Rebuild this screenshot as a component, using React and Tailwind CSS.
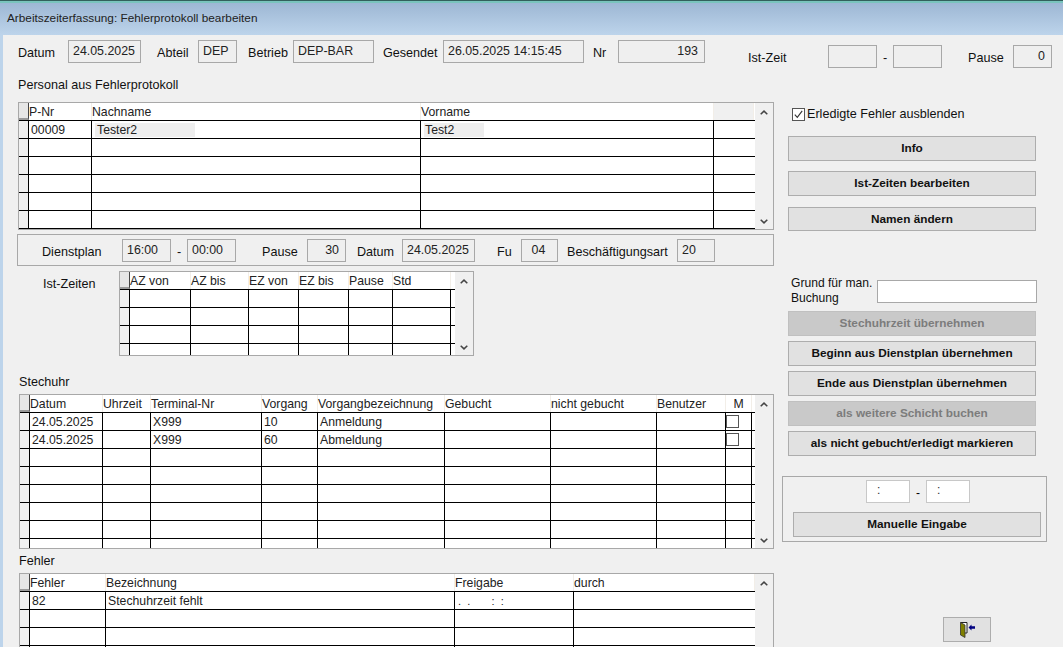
import React from "react";

const Label = ({ className = "", children }) => (
  <div className={"text-[12.6px] leading-[14px] text-[#111] whitespace-nowrap " + className}>{children}</div>
);

const Field = ({ className = "", children }) => (
  <div className={"h-[23px] shrink-0 border border-[#a8a8a8] bg-[#efefef] text-[12.4px] leading-[20px] text-[#222] pl-[4px] pr-[6px] whitespace-nowrap " + className}>{children}</div>
);

const Up = () => (
  <svg width="8" height="5" viewBox="0 0 8 5" fill="none" stroke="#444" strokeWidth="1.5"><path d="M0.7 4.3 4 1.1 7.3 4.3" /></svg>
);
const Down = () => (
  <svg width="8" height="5" viewBox="0 0 8 5" fill="none" stroke="#444" strokeWidth="1.5"><path d="M0.7 0.7 4 3.9 7.3 0.7" /></svg>
);

function Grid({ className, cols, rows, partial, headFill, partialClass }) {
  return (
    <div className={"flex border border-[#a8a8a8] bg-white overflow-hidden shrink-0 " + className}>
      <div className="flex-1 min-w-0 flex flex-col">
        <div className="flex h-[18px] shrink-0 border-b border-black text-[12.25px] leading-[19px] text-[#222]">
          <div className="w-[10px] shrink-0 bg-[#e6e6e6] border-r border-r-[#444] border-b-2 border-b-[#999]" />
          {cols.map((c, i) => (
            <div key={i} className={"shrink-0 whitespace-nowrap border-r border-r-[#f2eee8] " + c.w + " " + (c.head || "")}>{c.label}</div>
          ))}
          <div className={"flex-1 " + (headFill || "")} />
        </div>
        {rows.map((row, r) => (
          <div key={r} className="flex h-[18px] shrink-0 border-b border-black text-[12.25px] leading-[19px] text-[#222]">
            <div className="w-[10px] shrink-0 bg-[#f0f0f0] border-r border-black" />
            {cols.map((c, i) => (
              <div key={i} className={"shrink-0 whitespace-nowrap overflow-hidden " + c.w + " " + (c.open ? "" : "border-r border-black")}>
                {row[i]}
              </div>
            ))}
            <div className="flex-1" />
          </div>
        ))}
        {partial && (
          <div className={"flex shrink-0 " + partialClass}>
            <div className="w-[10px] shrink-0 bg-[#f0f0f0] border-r border-black" />
            {cols.map((c, i) => (
              <div key={i} className={"shrink-0 " + c.w + " " + (c.open ? "" : "border-r border-black")} />
            ))}
          </div>
        )}
      </div>
      <div className="w-[18px] shrink-0 bg-[#f0f0f0] flex flex-col items-center justify-between pt-[7px] pb-[5px]">
        <Up />
        <Down />
      </div>
    </div>
  );
}

const T = ({ className = "pl-[2px]", children }) => <div className={className}>{children}</div>;

const Btn = ({ className = "", disabled, children }) => (
  <div className={
    "flex items-center justify-center border pt-px text-[11.8px] font-bold whitespace-nowrap shrink-0 " +
    (disabled ? "bg-[#c9c9c9] border-[#c0c0c0] text-[#7c7c7c] " : "bg-[#e1e1e1] border-[#adadad] text-[#111] ") + className
  }>{children}</div>
);

const Check = () => (
  <div className="mt-[2px] w-[13px] h-[13px] border border-[#555] bg-white" />
);

export default function App() {
  return (
    <div className="w-[1063px] h-[647px] overflow-hidden bg-[#f0f0f0] flex flex-col font-['Liberation_Sans',Arial,sans-serif]">
      <div className="h-[35px] shrink-0 flex flex-col">
        <div className="h-[1px] bg-[#33605c]" />
        <div className="h-[2px] bg-[#79c4bd]" />
        <div className="flex-1 bg-gradient-to-b from-[#9db7d4] to-[#bdd4eb] pl-[7px] pt-[8px] text-[11.8px] leading-[14px] text-[#222]">
          Arbeitszeiterfassung: Fehlerprotokoll bearbeiten
        </div>
      </div>

      <div className="flex-1 min-h-0 flex">
        <div className="w-[3px] shrink-0 bg-[#bdd4eb]" />
        <div className="flex-1 min-w-0 flex flex-col">
          {/* Kopfzeile */}
          <div className="flex items-start h-[43px] shrink-0 pt-[5px] pl-[15px]">
            <Label className="w-[50px] pt-[6px]">Datum</Label>
            <Field className="w-[73px]">24.05.2025</Field>
            <Label className="w-[41px] ml-[16px] pt-[6px]">Abteil</Label>
            <Field className="w-[39px]">DEP</Field>
            <Label className="w-[45px] ml-[11px] pt-[6px]">Betrieb</Label>
            <Field className="w-[81px]">DEP-BAR</Field>
            <Label className="w-[60px] ml-[9px] pt-[6px]">Gesendet</Label>
            <Field className="w-[141px]">26.05.2025 14:15:45</Field>
            <Label className="w-[25px] ml-[9px] pt-[6px]">Nr</Label>
            <Field className="w-[87px] text-right">193</Field>
            <div className="flex items-start mt-[5px]">
              <Label className="w-[80px] ml-[43px] pt-[6px]">Ist-Zeit</Label>
              <Field className="w-[49px]" />
              <Label className="w-[16px] pt-[6px] text-center">-</Label>
              <Field className="w-[49px]" />
              <Label className="w-[45px] ml-[26px] pt-[6px]">Pause</Label>
              <Field className="w-[39px] text-right">0</Field>
            </div>
          </div>

          <div className="flex-1 min-h-0 flex">
            {/* Linke Spalte */}
            <div className="w-[772px] shrink-0 pl-[15px] flex flex-col">
              <Label className="h-[14px] text-[12.5px]">Personal aus Fehlerprotokoll</Label>
              <Grid
                className="mt-[10px] w-[756px] h-[128px]"
                cols={[
                  { w: "w-[63px]", label: "P-Nr" },
                  { w: "w-[329px]", label: "Nachname" },
                  { w: "w-[293px]", label: "Vorname" },
                  { w: "w-[40px]", head: "bg-[#f0f0f0]", label: "", open: true },
                ]}
                rows={[
                  [
                    <T>00009</T>,
                    <div className="ml-[3px] mt-[2px] w-[100px] h-[14px] leading-[14px] bg-[#eeeeee] pl-[2px]">Tester2</div>,
                    <div className="ml-[3px] mt-[2px] w-[60px] h-[14px] leading-[14px] bg-[#eeeeee] pl-[1px]">Test2</div>,
                    "",
                  ],
                  [], [], [], [], [],
                ]}
              />

              <div className="mt-[4px] -ml-px w-[757px] h-[32px] shrink-0 border border-[#a8a8a8] flex items-start pt-[4px] pl-[24px]">
                <Label className="w-[80px] pt-[6px]">Dienstplan</Label>
                <Field className="w-[49px]">16:00</Field>
                <Label className="w-[16px] pt-[6px] text-center">-</Label>
                <Field className="w-[49px]">00:00</Field>
                <Label className="w-[45px] ml-[26px] pt-[6px]">Pause</Label>
                <Field className="w-[39px] text-right">30</Field>
                <Label className="w-[45px] ml-[11px] pt-[6px]">Datum</Label>
                <Field className="w-[73px]">24.05.2025</Field>
                <Label className="w-[24px] ml-[22px] pt-[6px]">Fu</Label>
                <Field className="w-[37px] text-center">04</Field>
                <Label className="w-[110px] ml-[9px] pt-[6px]">Beschäftigungsart</Label>
                <Field className="w-[38px]">20</Field>
              </div>

              <div className="mt-[5px] flex items-start shrink-0">
                <Label className="w-[101px] pl-[25px] pt-[6px]">Ist-Zeiten</Label>
                <Grid
                  className="w-[355px] h-[85px]"
                  partial
                  partialClass="h-[12px]"
                  cols={[
                    { w: "w-[61px]", label: "AZ von" },
                    { w: "w-[58px]", label: "AZ bis" },
                    { w: "w-[50px]", label: "EZ von" },
                    { w: "w-[50px]", label: "EZ bis" },
                    { w: "w-[44px]", label: "Pause" },
                    { w: "w-[58px]", label: "Std" },
                  ]}
                  rows={[[], [], []]}
                />
              </div>

              <Label className="mt-[19px] ml-[1px] h-[14px]">Stechuhr</Label>
              <Grid
                className="mt-[5px] ml-[1px] w-[755px] h-[155px]"
                partial
                partialClass="h-[9px]"
                cols={[
                  { w: "w-[73px]", label: "Datum" },
                  { w: "w-[48px]", label: "Uhrzeit" },
                  { w: "w-[111px]", label: "Terminal-Nr" },
                  { w: "w-[56px]", label: "Vorgang" },
                  { w: "w-[127px]", label: "Vorgangbezeichnung" },
                  { w: "w-[106px]", label: "Gebucht" },
                  { w: "w-[106px]", label: "nicht gebucht" },
                  { w: "w-[69px]", label: "Benutzer" },
                  { w: "w-[26px]", label: "M", head: "text-center" },
                ]}
                rows={[
                  [<T>24.05.2025</T>, "", <T>X999</T>, <T>10</T>, <T>Anmeldung</T>, "", "", "", <Check />],
                  [<T>24.05.2025</T>, "", <T>X999</T>, <T>60</T>, <T>Abmeldung</T>, "", "", "", <Check />],
                  [], [], [], [], [],
                ]}
              />

              <Label className="mt-[5px] ml-[1px] h-[14px]">Fehler</Label>
              <Grid
                className="mt-[5px] ml-[1px] w-[755px] h-[90px]"
                cols={[
                  { w: "w-[76px]", label: "Fehler" },
                  { w: "w-[349px]", label: "Bezeichnung" },
                  { w: "w-[119px]", label: "Freigabe" },
                  { w: "w-[181px]", label: "durch", open: true },
                ]}
                rows={[
                  [<T>82</T>, <T>Stechuhrzeit fehlt</T>, <T className="pl-[3px] text-[11px] whitespace-pre">{".  .       :  :"}</T>, ""],
                  [], [], [],
                ]}
              />
            </div>

            {/* Rechte Spalte */}
            <div className="flex-1 min-w-0 pl-[13px] flex flex-col">
              <div className="mt-[29px] ml-[4px] h-[14px] flex items-center shrink-0">
                <div className="w-[13px] h-[13px] border border-[#555] bg-white flex items-center justify-center">
                  <svg width="11" height="11" viewBox="0 0 11 11" fill="none" stroke="#333" strokeWidth="1.1"><path d="M1.8 5.6 4.3 8.4 9.2 1.8" /></svg>
                </div>
                <Label className="ml-[2px]">Erledigte Fehler ausblenden</Label>
              </div>
              <Btn className="h-[25px] mt-[15px] w-[248px]">Info</Btn>
              <Btn className="h-[25px] mt-[10px] w-[248px]">Ist-Zeiten bearbeiten</Btn>
              <Btn className="h-[24px] mt-[11px] w-[248px]">Namen ändern</Btn>

              <div className="mt-[45px] flex items-start h-[28px] shrink-0">
                <Label className="w-[86px] ml-[3px] !text-[12.1px] leading-[15px]">Grund für man.<br />Buchung</Label>
                <div className="w-[160px] h-[23px] mt-[4px] border border-[#a8a8a8] bg-white" />
              </div>

              <Btn disabled className="h-[25px] mt-[7px] w-[248px]">Stechuhrzeit übernehmen</Btn>
              <Btn className="h-[25px] mt-[5px] w-[248px]">Beginn aus Dienstplan übernehmen</Btn>
              <Btn className="h-[25px] mt-[5px] w-[248px]">Ende aus Dienstplan übernehmen</Btn>
              <Btn disabled className="h-[25px] mt-[5px] w-[248px]">als weitere Schicht buchen</Btn>
              <Btn className="h-[25px] mt-[5px] w-[248px]">als nicht gebucht/erledigt markieren</Btn>

              <div className="mt-[20px] -ml-[6px] w-[265px] h-[66px] shrink-0 border border-[#a8a8a8] flex flex-col items-start">
                <div className="mt-[3px] ml-[83px] flex items-center">
                  <div className="w-[44px] h-[23px] bg-white border border-[#c8c8c8] text-[12px] leading-[19px] pl-[10px] text-[#333]">:</div>
                  <div className="w-[16px] text-center text-[12px] leading-[14px] pt-[3px]">-</div>
                  <div className="w-[44px] h-[23px] bg-white border border-[#c8c8c8] text-[12px] leading-[19px] pl-[10px] text-[#333]">:</div>
                </div>
                <Btn className="h-[25px] mt-[9px] ml-[10px] w-[248px]">Manuelle Eingabe</Btn>
              </div>

              <div className="mt-[75px] ml-[155px] w-[48px] h-[25px] shrink-0 bg-[#e1e1e1] border border-[#adadad] flex items-center justify-center">
                <svg width="16" height="16" viewBox="0 0 16 16">
                  <path d="M1.5 0.5H8V11H6" fill="#fff" stroke="#222" strokeWidth="1" />
                  <path d="M1.5 0.5 6 3V15.5L1.5 13Z" fill="#808000" stroke="#333" strokeWidth="0.8" />
                  <path d="M9.5 5.5 12.5 2.5V4.3H16V6.7H12.5V8.5Z" fill="#000080" />
                </svg>
              </div>
            </div>
          </div>
        </div>
      </div>
    </div>
  );
}
